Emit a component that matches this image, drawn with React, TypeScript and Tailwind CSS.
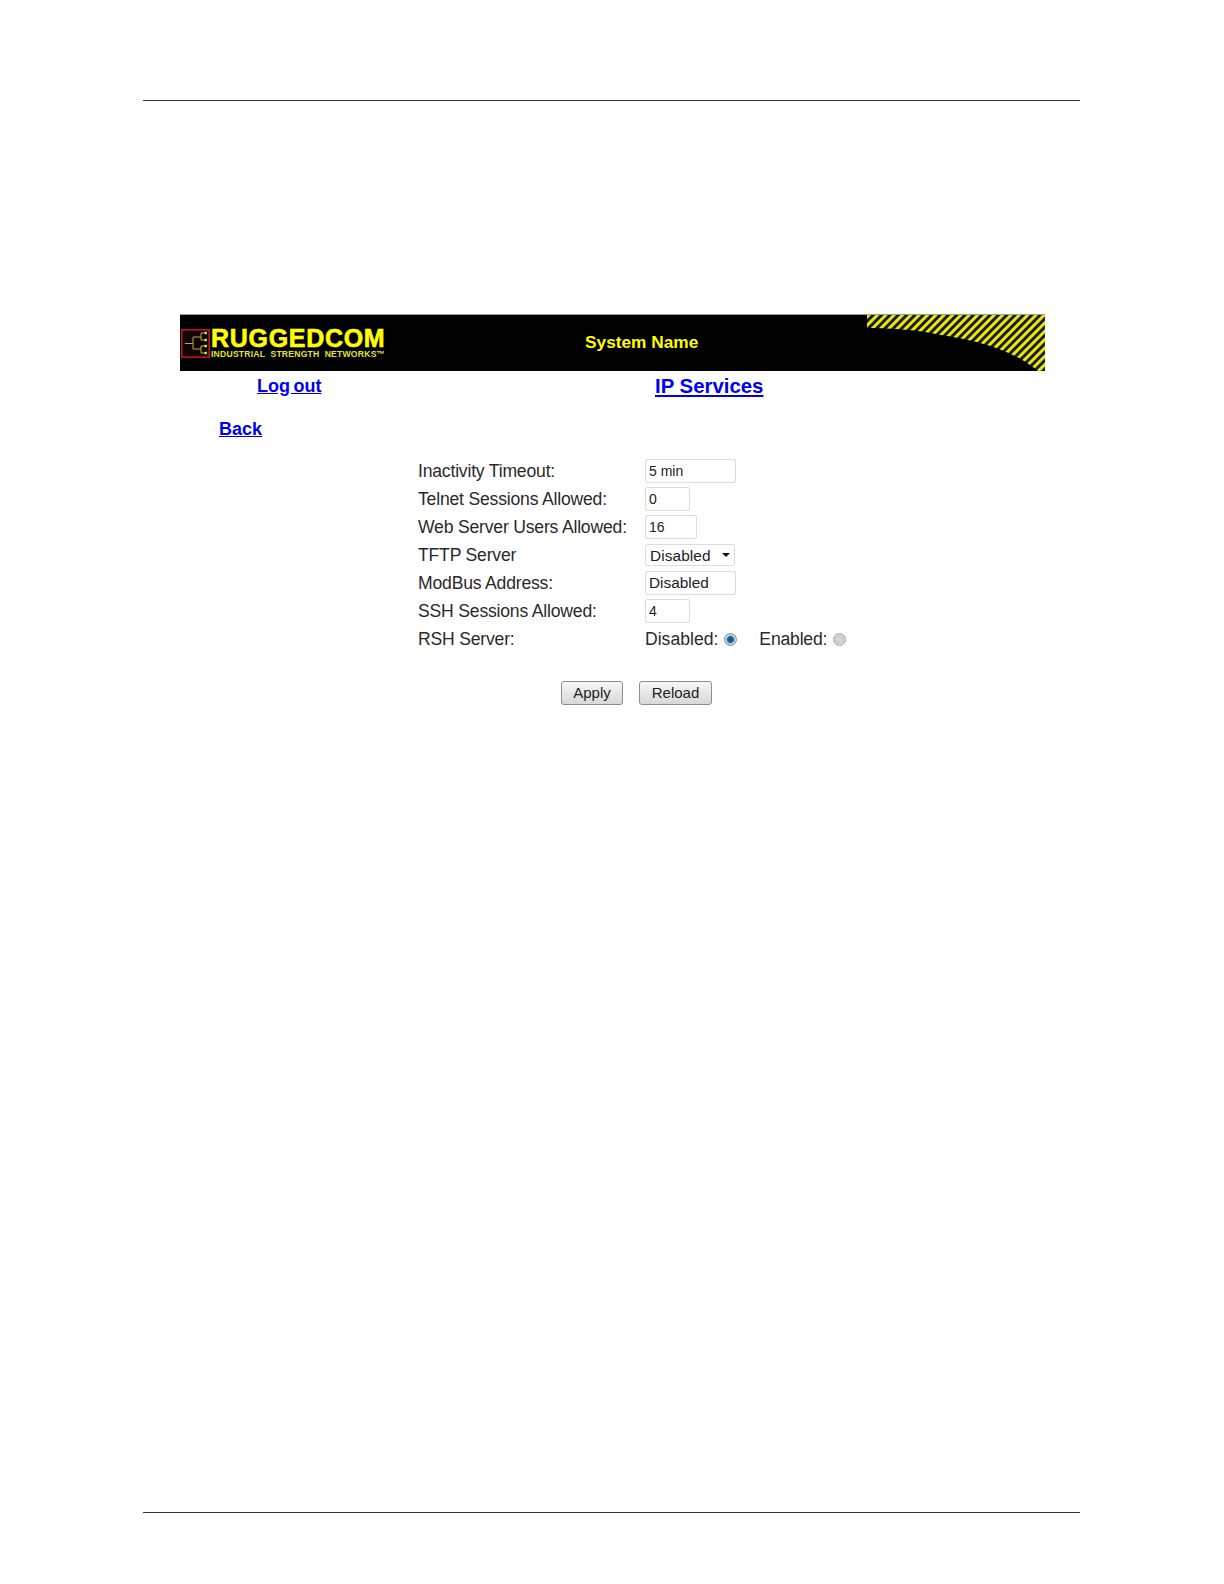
const inputCls = "h-[24px] border border-[#dcdcdc] rounded-[2px] bg-white pl-[3px] text-[14px] text-[#222] outline-none font-['Liberation_Sans',sans-serif] shadow-[inset_0_0_1px_#eee]";
const textCls = "text-[#2a2a2a] text-[17.6px] tracking-[-0.2px] whitespace-nowrap";

function Row({ label, children }: { label: string; children: React.ReactNode }) {
  return (
    <div className="flex items-center h-[28px]">
      <div className={`w-[227px] shrink-0 pt-[0.6px] ${textCls}`}>{label}</div>
      {children}
    </div>
  );
}

function Logo() {
  return (
    <div className="flex items-center w-[210px] shrink-0 pl-px">
      <svg width="29" height="29" viewBox="0 0 29 29" className="shrink-0">
        <rect x="0.8" y="0.8" width="27.4" height="27.4" fill="#120303" stroke="#b81818" strokeWidth="1.6" />
        <path d="M4 14.5H12M12 8V20M12 8H20M12 20H20M20 4V11M20 17V24M20 4H25M20 11H25M20 17H25M20 24H25" stroke="#b4b43a" strokeWidth="1" fill="none" />
        <g fill="#e0e040">
          <rect x="23.5" y="2.8" width="2.4" height="2.4" /><rect x="23.5" y="9.8" width="2.4" height="2.4" />
          <rect x="23.5" y="15.8" width="2.4" height="2.4" /><rect x="23.5" y="22.8" width="2.4" height="2.4" />
        </g>
      </svg>
      <div className="ml-px flex flex-col">
        <div className="text-[#ffff00] font-bold text-[25px] leading-[22px] tracking-[0.7px] whitespace-nowrap [-webkit-text-stroke:0.6px_#ffff00]">RUGGEDCOM</div>
        <div className="text-[#e4e430] font-bold text-[8.6px] leading-[10px] tracking-[0.22px] whitespace-nowrap">INDUSTRIAL&nbsp; STRENGTH&nbsp; NETWORKS™</div>
      </div>
    </div>
  );
}

function Stripes() {
  return (
    <svg width="178" height="56" viewBox="0 0 178 56" className="shrink-0">
      <defs>
        <pattern id="st" width="5.9" height="5.9" patternUnits="userSpaceOnUse" patternTransform="rotate(45)">
          <rect width="5.9" height="5.9" fill="#1a1a00" />
          <rect width="3" height="5.9" fill="#e6e61a" />
        </pattern>
      </defs>
      <path d="M0 0H178V56H171C151 40 126 28 74 20C51 15 25 13 0 13Z" fill="url(#st)" />
    </svg>
  );
}

export default function App() {
  return (
    <div className="w-[1224px] h-[1584px] bg-white flex flex-col pl-[143px] pr-[144px] font-['Liberation_Sans',Arial,sans-serif] overflow-hidden">
      <div className="mt-[100px] h-px bg-[#333] shrink-0" />
      <div className="mt-[213px] ml-[37px] w-[865px] h-[57px] bg-black border-t border-[#999] flex items-center shrink-0">
        <Logo />
        <div className="w-[477px] shrink-0 pl-[195px] text-[#ffff00] font-bold text-[17.3px] whitespace-nowrap">System Name</div>
        <Stripes />
      </div>
      <div className="flex items-center h-[30px] ml-[114px] font-bold text-[18px]">
        <a href="#" className="text-[#0000ee] underline w-[398px] shrink-0 [word-spacing:-1.5px]">Log out</a>
        <a href="#" className="text-[#0000ee] underline text-[20.4px]">IP Services</a>
      </div>
      <div className="mt-[13px] h-[30px] flex items-center ml-[76px] font-bold text-[18px]">
        <a href="#" className="text-[#0000ee] underline">Back</a>
      </div>
      <div className="mt-[13.4px] ml-[275px] flex flex-col">
        <Row label="Inactivity Timeout:"><input readOnly value="5 min" className={`${inputCls} w-[91px]`} /></Row>
        <Row label="Telnet Sessions Allowed:"><input readOnly value="0" className={`${inputCls} w-[45px]`} /></Row>
        <Row label="Web Server Users Allowed:"><input readOnly value="16" className={`${inputCls} w-[52px]`} /></Row>
        <Row label="TFTP Server">
          <div className="h-[22px] w-[90px] border border-[#dcdcdc] rounded-[2px] flex items-center pl-[4px] text-[15.4px] text-[#222] tracking-[0.1px]">
            <span>Disabled</span>
            <svg width="8" height="4" viewBox="0 0 8 4" className="ml-[11px]"><path d="M0 0H8L4 4Z" fill="#111" /></svg>
          </div>
        </Row>
        <Row label="ModBus Address:"><input readOnly value="Disabled" className={`${inputCls} w-[91px] text-[15.4px]`} /></Row>
        <Row label="SSH Sessions Allowed:"><input readOnly value="4" className={`${inputCls} w-[45px]`} /></Row>
        <Row label="RSH Server:">
          <span className={`${textCls} tracking-[0px]`}>Disabled:</span>
          <span className="ml-[6px] w-[13px] h-[13px] rounded-full border border-[#8a8a8a] bg-[radial-gradient(circle,#0b4f7c_0,#1c6fa3_38%,#c4d2dc_55%,#d4d8dc_100%)]" />
          <span className={`ml-[22px] ${textCls}`}>Enabled:</span>
          <span className="ml-[6px] w-[13px] h-[13px] rounded-full border border-[#a8a8a8] bg-[radial-gradient(circle,#e0e0e0_0,#cacaca_45%,#eeeeee_100%)]" />
        </Row>
      </div>
      <div className="mt-[27.6px] ml-[418px] flex gap-[16px]">
        <button className="w-[62px] h-[24px] border border-[#8e8e8e] rounded-[3px] bg-gradient-to-b from-[#f6f6f6] to-[#d8d8d8] text-[#222] text-[15px]">Apply</button>
        <button className="w-[73px] h-[24px] border border-[#8e8e8e] rounded-[3px] bg-gradient-to-b from-[#f6f6f6] to-[#d8d8d8] text-[#222] text-[15px]">Reload</button>
      </div>
      <div className="mt-auto mb-[71px] h-px bg-[#333] shrink-0" />
    </div>
  );
}
